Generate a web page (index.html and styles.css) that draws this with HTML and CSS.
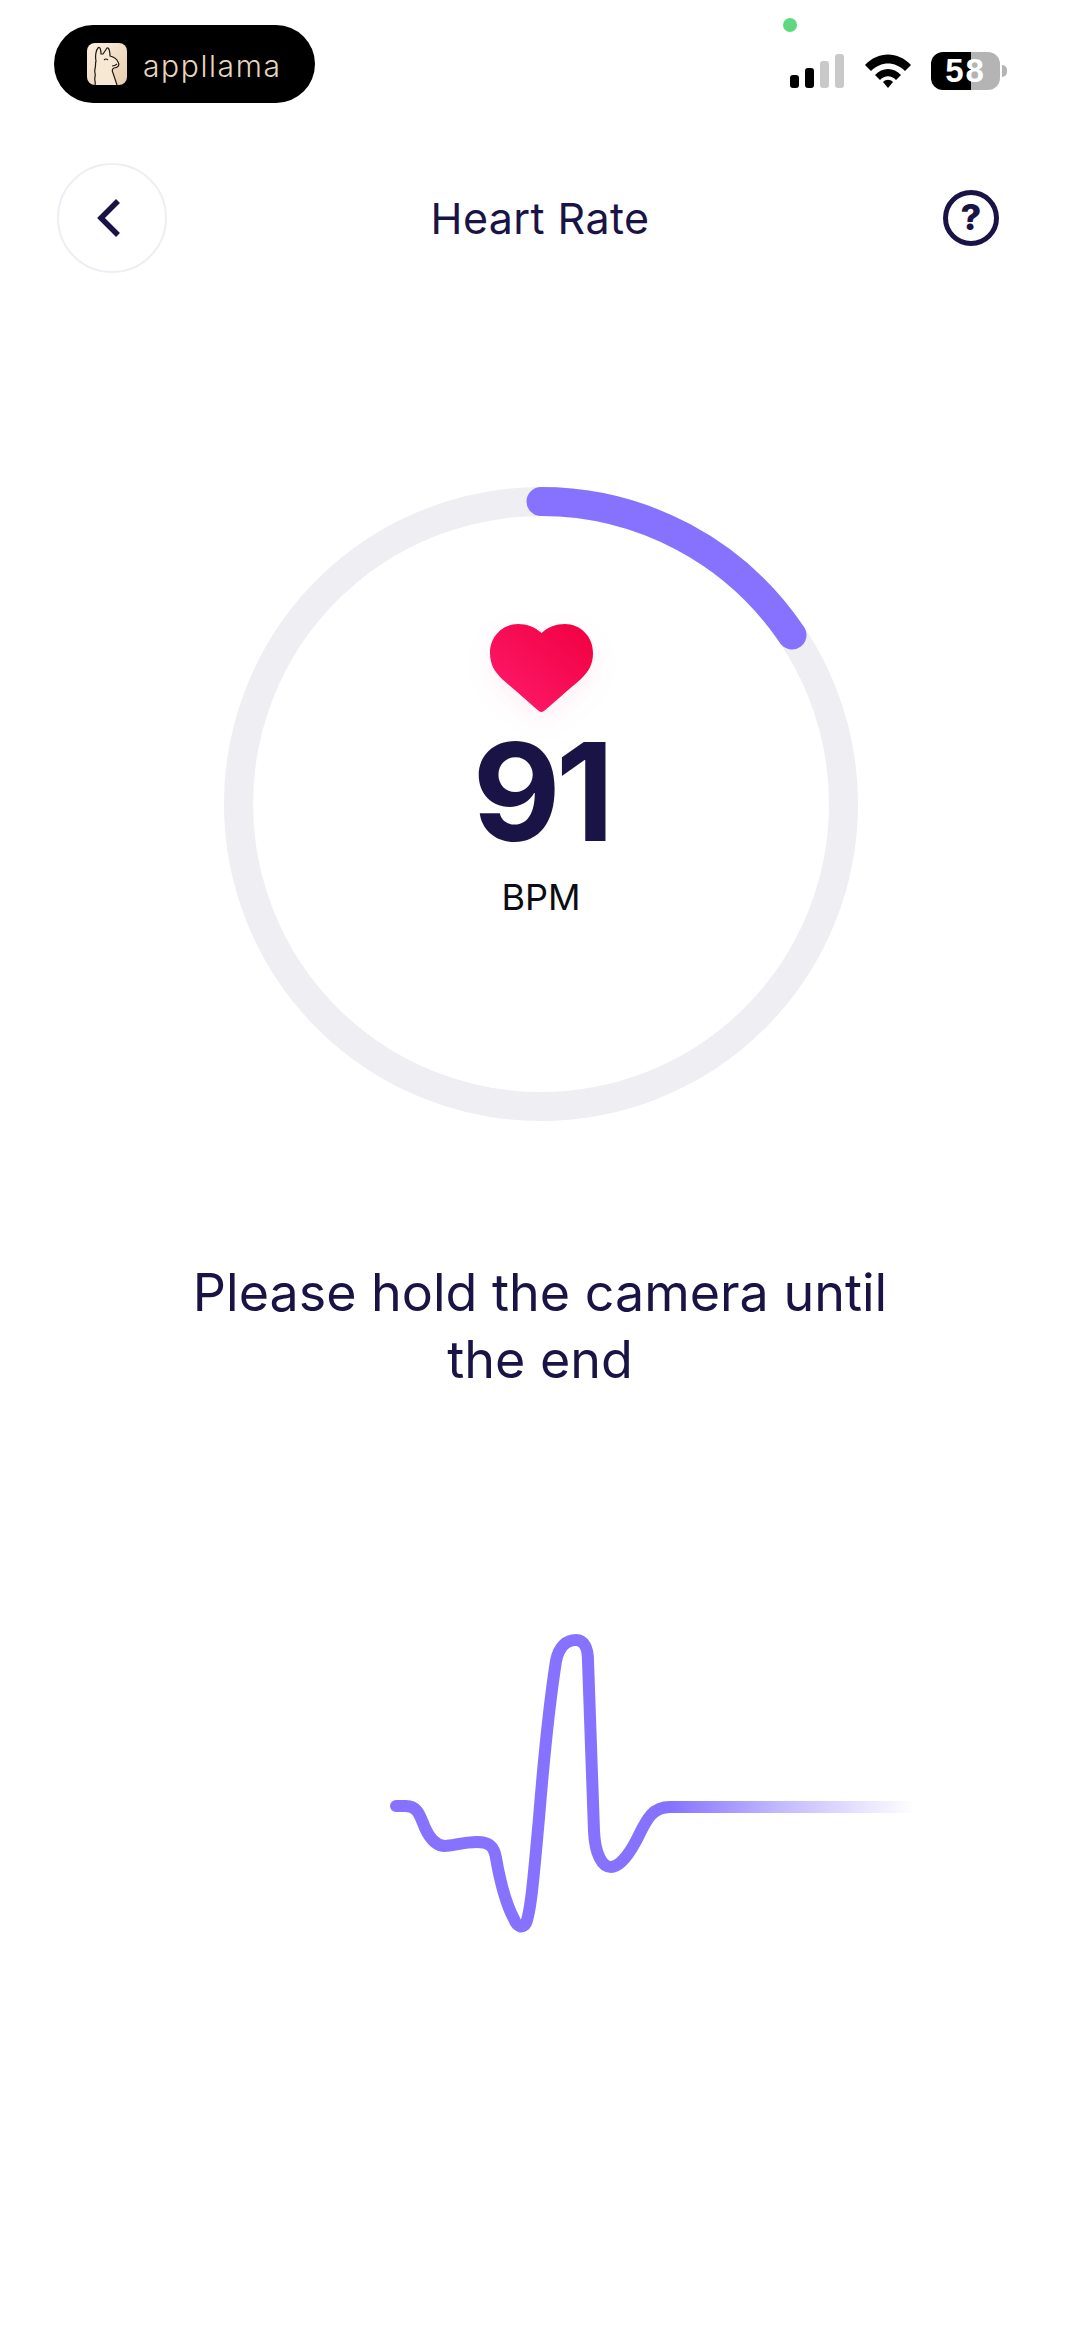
FILE: index.html
```html
<!DOCTYPE html>
<html>
<head>
<meta charset="utf-8">
<title>Heart Rate</title>
<meta name="viewport" content="width=device-width">
<link rel="stylesheet" href="styles.css">
</head>
<body>
<div class="status">
  <div class="brand">
    <svg class="brand-icon" viewBox="0 0 40 42">
      <defs>
        <linearGradient id="tile" x1="0" y1="0" x2="1" y2="1">
          <stop offset="0" stop-color="#fbf0e2"/>
          <stop offset="1" stop-color="#e6cdaa"/>
        </linearGradient>
      </defs>
      <rect width="40" height="42" rx="8" fill="url(#tile)"/>
      <!-- llama head -->
      <path d="M8 42 C9 39 7 37 8 34 C9 31 7 29 8 26 C9 23 8 21 9 18 C8 13 9 7 11 5 C13 3 14 7 14 11 L16 11 L20 5 C22 4 23 9 23 13 C27 14 30 16 31 19 C33 22 31 25 27 25 C25 26 25 28 26 30 L30 42" fill="#f7e8d3" stroke="#1d1712" stroke-width="1.2" stroke-linejoin="round"/>
      <path d="M17 17 q2 -2 4 0 M25 23 q3 0 5 -2" fill="none" stroke="#1d1712" stroke-width="1.1"/>
    </svg>
    <span class="brand-name">appllama</span>
  </div>
  <span class="mic-dot"></span>
  <div class="indicators">
    <div class="signal">
      <i class="bar bar1"></i><i class="bar bar2"></i><i class="bar bar3"></i><i class="bar bar4"></i>
    </div>
    <svg class="wifi" viewBox="0 0 46 34">
      <path d="M0 11 C13 -3 33 -3 46 11 L40 17 C30 7 16 7 6 17 Z"/>
      <path d="M10 21 C17 13 29 13 36 21 L31 26 C26 21 20 21 15 26 Z"/>
      <path d="M18 28 C21 25 25 25 28 28 L23 34 Z"/>
    </svg>
    <div class="battery">
      <div class="battery-body"><span class="battery-level">58</span></div>
      <i class="battery-nub"></i>
    </div>
  </div>
</div>

<div class="appbar">
  <button class="back">
    <svg viewBox="0 0 24 40" width="24" height="40"><path d="M21 3 L4 20 L21 37" fill="none" stroke="#1a1446" stroke-width="5.5"/></svg>
  </button>
  <h1 class="title">Heart Rate</h1>
  <div class="help">?</div>
</div>

<div class="gauge">
  <svg class="ring" viewBox="0 0 634 634">
    <circle cx="317" cy="317" r="302.5" fill="none" stroke="#eeeef3" stroke-width="29"/>
    <path d="M317 14.5 A302.5 302.5 0 0 1 568 148" fill="none" stroke="#8672ff" stroke-width="29" stroke-linecap="round"/>
  </svg>
  <div class="reading">
    <svg class="heart" viewBox="0 0 103 88">
      <defs>
        <linearGradient id="heartFill" x1="0" y1="1" x2="1" y2="0">
          <stop offset="0" stop-color="#ff1c6e"/>
          <stop offset="1" stop-color="#f00040"/>
        </linearGradient>
      </defs>
      <path d="M51.5 88 C49 88 46 84 12 55 C4 47 0 40 0 29 C0 12 13 0 28 0 C37 0 45 3 51.5 9 C58 3 66 0 75 0 C90 0 103 12 103 29 C103 40 99 47 91 55 C57 84 54 88 51.5 88 Z" fill="url(#heartFill)"/>
    </svg>
    <div class="bpm">91</div>
    <div class="unit">BPM</div>
  </div>
</div>

<p class="hint">Please hold the camera until<br>the end</p>

<svg class="wave" viewBox="0 0 600 340">
  <defs>
    <linearGradient id="trace" gradientUnits="userSpaceOnUse" x1="0" y1="0" x2="545" y2="0">
      <stop offset="0.55" stop-color="#8672ff"/>
      <stop offset="0.75" stop-color="#8672ff" stop-opacity="0.5"/>
      <stop offset="1" stop-color="#8672ff" stop-opacity="0"/>
    </linearGradient>
  </defs>
  <path d="M26 195 H36 C48 195 50 205 55 217 C61 230 67 235 75 235 C82 235 94 231 107 231 C119 231 124 235 126 247 C130 270 136 293 144 308 C147 316 153 318 156 312 C161 300 164 262 169 207 C174 145 179 95 186 50 C189 35 197 29 206 29 C214 29 218 37 218 50 L224 220 C225 243 232 256 241 256 C249 256 258 245 266 230 C276 210 281 196 300 196 H545" fill="none" stroke="url(#trace)" stroke-width="12" stroke-linecap="round"/>
</svg>
</body>
</html>
```

FILE: styles.css
```css
html, body {
  margin: 0;
  background: #fff;
  font-family: Inter, "Noto Sans", sans-serif;
  color: #1a1446;
}
* {
  box-sizing: border-box;
}

/* status bar */
.status {
  position: relative;
  height: 163px;
  padding: 25px 73px 0 54px;
  display: flex;
  justify-content: space-between;
}
.brand {
  width: 261px;
  height: 78px;
  border-radius: 39px;
  background: #000;
  display: flex;
  align-items: center;
  padding-left: 33px;
  gap: 16px;
}
.brand-icon {
  width: 40px;
  height: 42px;
}
.brand-name {
  font-size: 30px;
  font-weight: 300;
  letter-spacing: 1.6px;
  color: #e6d5bf;
  padding-top: 4px;
}
.mic-dot {
  position: absolute;
  left: 783px;
  top: 18px;
  width: 14px;
  height: 14px;
  border-radius: 50%;
  background: #5ed97f;
}
.indicators {
  display: flex;
  align-items: center;
  height: 38px;
  margin-top: 27px;
}
.signal {
  display: flex;
  align-items: flex-end;
  gap: 6px;
  height: 34px;
  margin-right: 21px;
}
.bar {
  display: block;
  width: 9px;
  border-radius: 3px;
  background: #000;
}
.bar1 { height: 13px; }
.bar2 { height: 20px; }
.bar3 { height: 27px; background: #c9c9c9; }
.bar4 { height: 34px; background: #c9c9c9; }
.wifi {
  width: 46px;
  height: 34px;
  margin-right: 20px;
}
.battery {
  display: flex;
  align-items: center;
  gap: 2px;
}
.battery-body {
  width: 69px;
  height: 38px;
  border-radius: 12px;
  background: linear-gradient(90deg, #000 40px, #b4b4b4 40px);
  text-align: center;
}
.battery-level {
  font-family: "Liberation Sans", sans-serif;
  font-size: 33px;
  font-weight: 700;
  line-height: 38px;
  letter-spacing: 2px;
  color: #fff;
}
.battery-nub {
  display: block;
  width: 5px;
  height: 12px;
  border-radius: 0 6px 6px 0;
  background: #b4b4b4;
}

/* title row */
.appbar {
  display: grid;
  grid-template-columns: 1fr auto 1fr;
  align-items: center;
  height: 110px;
  padding: 0 57px;
}
.back {
  width: 110px;
  height: 110px;
  border: 2px solid #eeeef4;
  border-radius: 50%;
  background: #fff;
  padding: 0 6px 0 0;
  display: flex;
  align-items: center;
  justify-content: center;
}
.title {
  margin: 0;
  font-size: 43px;
  font-weight: 400;
  letter-spacing: 0.4px;
}
.help {
  justify-self: end;
  margin-right: 24px;
  width: 56px;
  height: 56px;
  border: 5px solid #1a1446;
  border-radius: 50%;
  text-align: center;
  font-size: 36px;
  font-weight: 800;
  line-height: 45px;
}

/* gauge */
.gauge {
  position: relative;
  width: 634px;
  height: 634px;
  margin: 214px 0 0 224px;
}
.ring {
  display: block;
  width: 634px;
  height: 634px;
}
.reading {
  position: absolute;
  inset: 0;
  padding-top: 137px;
  display: flex;
  flex-direction: column;
  align-items: center;
}
.heart {
  width: 103px;
  height: 88px;
  filter: drop-shadow(0 10px 14px rgba(240, 0, 64, 0.06));
}
.bpm {
  font-size: 136px;
  font-weight: 700;
  letter-spacing: -5px;
  line-height: 130px;
  margin-top: 15px;
}
.unit {
  font-size: 36px;
  line-height: 44px;
  color: #0c0c14;
  margin-top: 18px;
}

.hint {
  margin: 138px 0 0;
  text-align: center;
  font-size: 52px;
  line-height: 67px;
}

.wave {
  display: block;
  width: 600px;
  height: 340px;
  margin: 218px 0 0 370px;
}
```
